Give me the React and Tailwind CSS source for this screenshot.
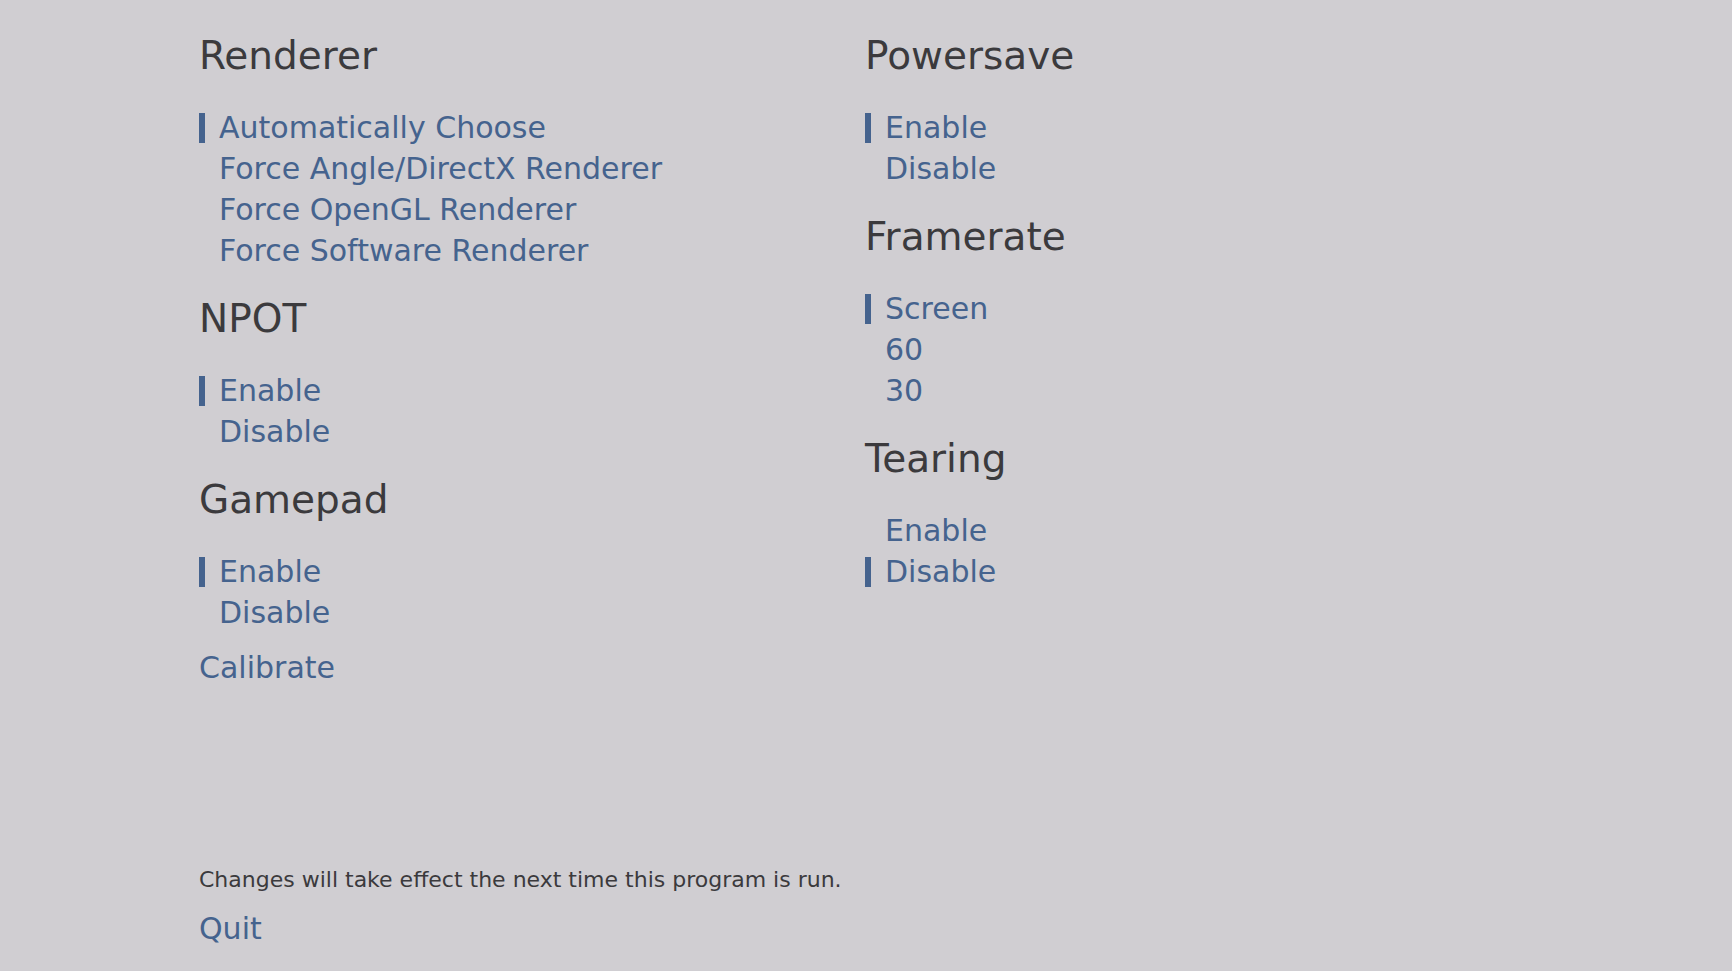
import React from "react";

const font = { fontFamily: '"DejaVu Sans", sans-serif' };

function Heading({ children, first }) {
  return (
    <div className={(first ? "" : "mt-[25px] ") + "mb-[28px] text-[39px] leading-[46px] text-[#3b3a3d]"}>
      {children}
    </div>
  );
}

function Choice({ label, selected }) {
  return (
    <div className="flex items-center h-[41px] text-[30px] leading-[41px] text-[#45638e]">
      <span className={"w-[6px] h-[30px] mr-[14px] " + (selected ? "bg-[#45638e]" : "bg-transparent")} />
      <span>{label}</span>
    </div>
  );
}

function Group({ title, items, selected, first }) {
  return (
    <div>
      <Heading first={first}>{title}</Heading>
      {items.map((it) => (
        <Choice key={it} label={it} selected={it === selected} />
      ))}
    </div>
  );
}

export default function App() {
  return (
    <div className="h-[971px] w-full bg-[#d0ced2] flex flex-col pl-[199px] pt-[33px] pb-[22px]" style={font}>
      <div className="flex">
        <div className="w-[666px]">
          <Group
            first
            title="Renderer"
            items={["Automatically Choose", "Force Angle/DirectX Renderer", "Force OpenGL Renderer", "Force Software Renderer"]}
            selected="Automatically Choose"
          />
          <Group title="NPOT" items={["Enable", "Disable"]} selected="Enable" />
          <Group title="Gamepad" items={["Enable", "Disable"]} selected="Enable" />
          <div className="mt-[14px] text-[30px] leading-[41px] text-[#45638e]">Calibrate</div>
        </div>
        <div>
          <Group first title="Powersave" items={["Enable", "Disable"]} selected="Enable" />
          <Group title="Framerate" items={["Screen", "60", "30"]} selected="Screen" />
          <Group title="Tearing" items={["Enable", "Disable"]} selected="Disable" />
        </div>
      </div>
      <div className="mt-auto">
        <div className="text-[22px] leading-[30px] text-[#3b3a3d]">Changes will take effect the next time this program is run.</div>
        <div className="mt-[13px] text-[30px] leading-[41px] text-[#45638e]">Quit</div>
      </div>
    </div>
  );
}
